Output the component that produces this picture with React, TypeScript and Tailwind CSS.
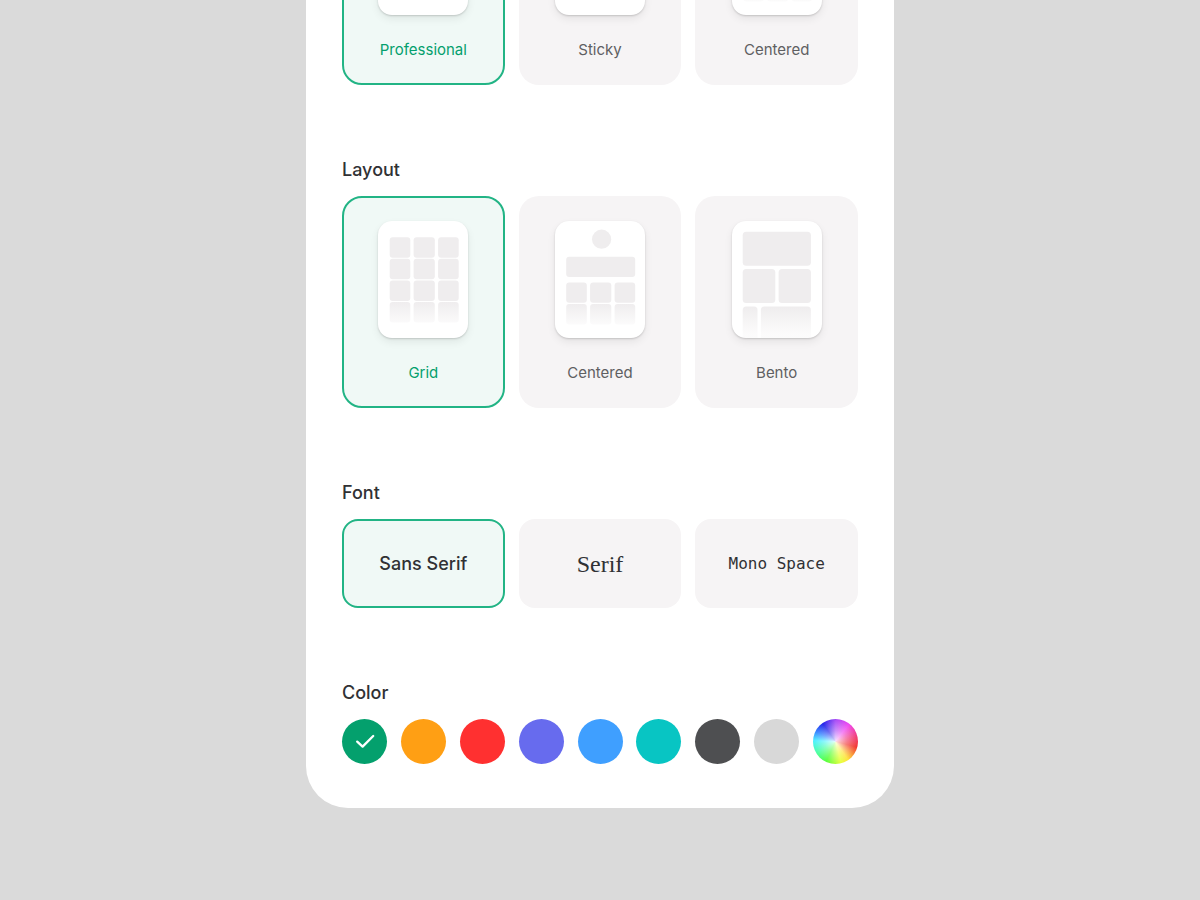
import { useState } from "react";
import type { ReactNode } from "react";

type Option = { id: string; label: string; art: ReactNode };

const COLUMNS = [
  { x: 11.2, w: 20.6 },
  { x: 35.1, w: 21.2 },
  { x: 59.6, w: 20.6 },
];

function Fade({ id, y1, y2 }: { id: string; y1: number; y2: number }) {
  return (
    <defs>
      <linearGradient id={id} gradientUnits="userSpaceOnUse" x1="0" y1={y1} x2="0" y2={y2}>
        <stop offset="0" stopColor="#efedee" />
        <stop offset="1" stopColor="#efedee" stopOpacity="0.2" />
      </linearGradient>
    </defs>
  );
}

function CellRow({ y, fill = "#efedee" }: { y: number; fill?: string }) {
  return (
    <>
      {COLUMNS.map((c) => (
        <rect key={c.x} x={c.x} y={y} width={c.w} height="20.4" rx="3" fill={fill} />
      ))}
    </>
  );
}

function Wireframe({ children }: { children: ReactNode }) {
  return (
    <span className="block overflow-hidden rounded-[14px] bg-white shadow-[0_1px_2px_rgba(0,0,0,0.16),0_4px_9px_rgba(0,0,0,0.07)]">
      <svg viewBox="0 0 90 117" className="block h-[117px] w-[90px]" aria-hidden="true">
        {children}
      </svg>
    </span>
  );
}

function ProfessionalArt() {
  return (
    <Wireframe>
      <rect x="11.2" y="11" width="69" height="34" rx="3" fill="#efedee" />
      <circle cx="23" cy="56" r="9.6" fill="#efedee" />
      <rect x="11.2" y="72" width="69" height="14" rx="3" fill="#efedee" />
    </Wireframe>
  );
}

function StickyArt() {
  return (
    <Wireframe>
      <rect x="11.2" y="11" width="69" height="14" rx="3" fill="#efedee" />
      <rect x="11.2" y="30" width="69" height="54" rx="3" fill="#efedee" />
    </Wireframe>
  );
}

function CenteredArt({ id }: { id: string }) {
  return (
    <Wireframe>
      <Fade id={id} y1={83} y2={104} />
      <circle cx="46.6" cy="18.2" r="9.6" fill="#efedee" />
      <rect x="11.2" y="35.7" width="69" height="20.4" rx="3" fill="#efedee" />
      <CellRow y={61.4} />
      <CellRow y={83} fill={`url(#${id})`} />
    </Wireframe>
  );
}

function GridArt() {
  return (
    <Wireframe>
      <Fade id="grid-fade" y1={81} y2={104} />
      <g transform="translate(0.5 -0.2)">
        <CellRow y={16.5} />
        <CellRow y={38} />
        <CellRow y={59.8} />
        <CellRow y={81.3} fill="url(#grid-fade)" />
      </g>
    </Wireframe>
  );
}

function BentoArt() {
  return (
    <Wireframe>
      <Fade id="bento-fade" y1={86} y2={113} />
      <rect x="10.7" y="10.8" width="68.2" height="34" rx="3.5" fill="#efedee" />
      <rect x="10.7" y="48" width="32.6" height="34" rx="3.5" fill="#efedee" />
      <rect x="46.6" y="48" width="32.3" height="34" rx="3.5" fill="#efedee" />
      <rect x="10.7" y="85.4" width="14.8" height="40" rx="3.5" fill="url(#bento-fade)" />
      <rect x="28.9" y="85.4" width="50" height="40" rx="3.5" fill="url(#bento-fade)" />
    </Wireframe>
  );
}

const HEADERS: Option[] = [
  { id: "professional", label: "Professional", art: <ProfessionalArt /> },
  { id: "sticky", label: "Sticky", art: <StickyArt /> },
  { id: "centered", label: "Centered", art: <CenteredArt id="header-fade" /> },
];

const LAYOUTS: Option[] = [
  { id: "grid", label: "Grid", art: <GridArt /> },
  { id: "centered", label: "Centered", art: <CenteredArt id="layout-fade" /> },
  { id: "bento", label: "Bento", art: <BentoArt /> },
];

const FONTS = [
  { id: "sans", label: "Sans Serif", face: "text-lg font-medium" },
  { id: "serif", label: "Serif", face: "font-['Liberation_Serif',serif] text-2xl" },
  { id: "mono", label: "Mono Space", face: "font-['DejaVu_Sans_Mono',monospace] text-base" },
];

const COLORS = [
  { id: "Green", fill: "bg-[#04a06d]" },
  { id: "Orange", fill: "bg-[#ff9f14]" },
  { id: "Red", fill: "bg-[#ff3030]" },
  { id: "Indigo", fill: "bg-[#676bee]" },
  { id: "Blue", fill: "bg-[#3f9fff]" },
  { id: "Teal", fill: "bg-[#08c5c3]" },
  { id: "Charcoal", fill: "bg-[#4e4f51]" },
  { id: "Silver", fill: "bg-[#d8d8d8]" },
  {
    id: "Custom",
    fill: "bg-[radial-gradient(circle,rgba(255,255,255,0.85)_0%,rgba(255,255,255,0.4)_35%,rgba(255,255,255,0.05)_70%),conic-gradient(#a040f5_0deg,#ee3cf0_38deg,#f0306a_78deg,#f02a20_105deg,#ffe030_145deg,#e8ff30_165deg,#4dff30_205deg,#40ffa0_240deg,#40f0ff_272deg,#2878ff_298deg,#1414e8_325deg,#a040f5_360deg)]",
  },
];

const SELECTED = "border-[#22b485] bg-[#f0f9f6]";
const IDLE = "border-transparent bg-[#f6f4f5]";

function Section({ title, name, children }: { title?: string; name: string; children: ReactNode }) {
  return (
    <section aria-label={name} className="flex flex-col gap-3">
      {title && <h2 className="text-lg leading-7 font-medium">{title}</h2>}
      {children}
    </section>
  );
}

function CardPicker({ options, initial }: { options: Option[]; initial: string }) {
  const [value, setValue] = useState(initial);
  return (
    <div className="grid grid-cols-3 gap-3.5">
      {options.map((o) => (
        <button
          key={o.id}
          type="button"
          aria-pressed={value === o.id}
          onClick={() => setValue(o.id)}
          className={`flex flex-col items-center gap-[25px] rounded-[20px] border-2 py-[23px] text-[15px] leading-5 ${
            value === o.id ? `${SELECTED} text-[#04a06d]` : `${IDLE} text-[#5f5f62]`
          }`}
        >
          {o.art}
          {o.label}
        </button>
      ))}
    </div>
  );
}

export default function App() {
  const [font, setFont] = useState("sans");
  const [color, setColor] = useState("Green");

  return (
    <main className="flex h-screen flex-col items-center justify-end overflow-hidden bg-[#dadada] pb-[92px] font-['Inter',sans-serif] text-[#303134]">
      <div className="flex w-full max-w-[588px] shrink-0 flex-col gap-[71px] rounded-b-[42px] bg-white px-9 pb-11">
        <Section name="Header">
          <CardPicker options={HEADERS} initial="professional" />
        </Section>

        <Section title="Layout" name="Layout">
          <CardPicker options={LAYOUTS} initial="grid" />
        </Section>

        <Section title="Font" name="Font">
          <div className="grid grid-cols-3 gap-3.5">
            {FONTS.map((f) => (
              <button
                key={f.id}
                type="button"
                aria-pressed={font === f.id}
                onClick={() => setFont(f.id)}
                className={`h-[89px] rounded-2xl border-2 ${f.face} ${font === f.id ? SELECTED : IDLE}`}
              >
                {f.label}
              </button>
            ))}
          </div>
        </Section>

        <Section title="Color" name="Color">
          <div className="flex justify-between">
            {COLORS.map((c) => (
              <button
                key={c.id}
                type="button"
                aria-label={c.id}
                aria-pressed={color === c.id}
                onClick={() => setColor(c.id)}
                className={`flex size-[45px] items-center justify-center rounded-full ${c.fill}`}
              >
                {color === c.id && (
                  <svg viewBox="0 0 20 16" className="h-4 w-5" fill="none" aria-hidden="true">
                    <path
                      d="M2.2 7.6 7.6 12.6 18.2 2"
                      stroke="white"
                      strokeWidth="2.3"
                      strokeLinecap="round"
                      strokeLinejoin="round"
                    />
                  </svg>
                )}
              </button>
            ))}
          </div>
        </Section>
      </div>
    </main>
  );
}
